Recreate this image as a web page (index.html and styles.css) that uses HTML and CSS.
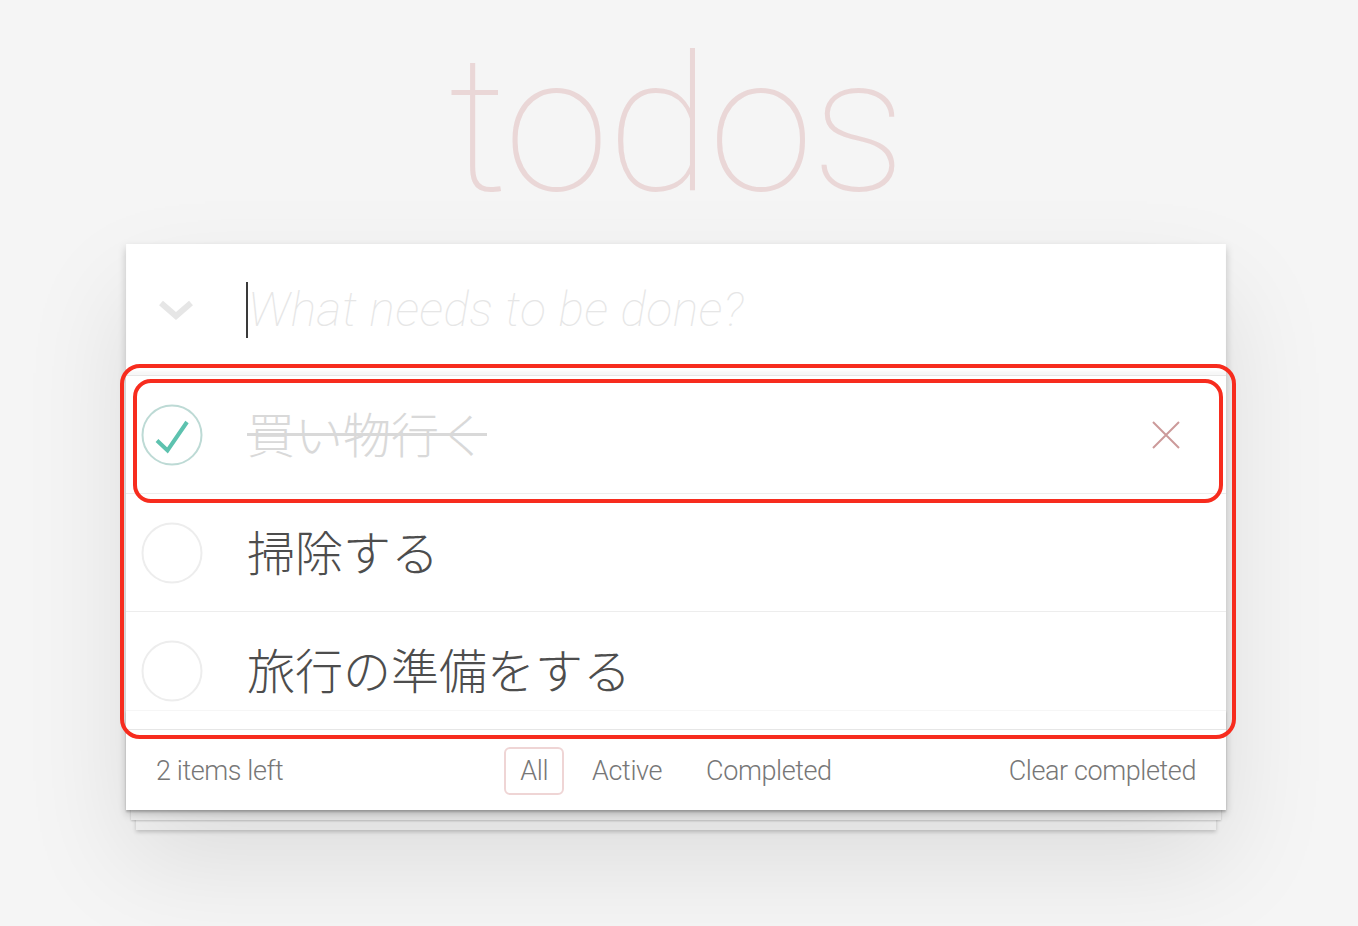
FILE: index.html
```html
<!DOCTYPE html>
<html lang="ja">
<head>
<meta charset="utf-8">
<title>todos</title>
<link rel="stylesheet" href="styles.css">
</head>
<body>
<div class="page">
  <h1 class="title">todos</h1>
  <section class="todoapp">
    <header class="header">
      <div class="toggle-all">
        <svg width="36" height="24" viewBox="0 0 36 24"><polyline points="3,3 18,16 33,3" fill="none" stroke="#e6e6e6" stroke-width="6" stroke-linejoin="miter"/></svg>
      </div>
      <div class="new-todo"><span class="caret"></span><span class="placeholder">What needs to be done?</span></div>
    </header>
    <main class="main">
      <ul class="todo-list">
        <li class="todo completed">
          <span class="toggle">
            <svg width="62" height="62" viewBox="0 0 62 62"><circle cx="31" cy="31" r="29.5" fill="none" stroke="#bddad5" stroke-width="2"/><polyline points="16,36.5 26.5,46.5 46,18" fill="none" stroke="#5dc2af" stroke-width="4"/></svg>
          </span>
          <span class="label">買い物行く</span>
          <span class="destroy">
            <svg width="30" height="30" viewBox="0 0 30 30"><path d="M2 2 L28 28 M28 2 L2 28" stroke="#cc9a9a" stroke-width="2" fill="none"/></svg>
          </span>
        </li>
        <li class="todo">
          <span class="toggle">
            <svg width="62" height="62" viewBox="0 0 62 62"><circle cx="31" cy="31" r="29.5" fill="none" stroke="#ededed" stroke-width="2"/></svg>
          </span>
          <span class="label">掃除する</span>
        </li>
        <li class="todo last">
          <span class="toggle">
            <svg width="62" height="62" viewBox="0 0 62 62"><circle cx="31" cy="31" r="29.5" fill="none" stroke="#ededed" stroke-width="2"/></svg>
          </span>
          <span class="label">旅行の準備をする</span>
        </li>
      </ul>
    </main>
    <footer class="footer">
      <span class="todo-count">2 items left</span>
      <ul class="filters">
        <li><a class="selected">All</a></li>
        <li><a>Active</a></li>
        <li><a>Completed</a></li>
      </ul>
      <span class="clear-completed">Clear completed</span>
    </footer>
  </section>
</div>
<div class="annot annot-outer"></div>
<div class="annot annot-inner"></div>
</body>
</html>
```

FILE: styles.css
```css
html, body {
  margin: 0;
  padding: 0;
}
body {
  background: #f5f5f5;
  font-family: "Roboto", "Noto Sans CJK JP", sans-serif;
  color: #4d4d4d;
  min-height: 926px;
  position: relative;
}
.page {
  padding-top: 25px;
}
.title {
  margin: 0 0 19px 126px;
  width: 1100px;
  text-align: center;
  font-size: 190px;
  line-height: 200px;
  height: 200px;
  font-weight: 100;
  color: rgba(175, 47, 47, 0.15);
  letter-spacing: -2px;
}
.todoapp {
  width: 1100px;
  margin-left: 126px;
  background: #fff;
  position: relative;
  box-shadow: 0 4px 8px 0 rgba(0, 0, 0, 0.2), 0 50px 100px 0 rgba(0, 0, 0, 0.1);
}
.header {
  display: flex;
  align-items: center;
  height: 131px;
  box-shadow: inset 0 -4px 2px rgba(0, 0, 0, 0.03);
}
.toggle-all {
  width: 120px;
  box-sizing: border-box;
  padding-left: 32px;
  padding-top: 4px;
  display: flex;
}
.new-todo {
  display: flex;
  align-items: center;
  height: 67px;
  font-size: 48px;
  font-style: italic;
  font-weight: 300;
}
.caret {
  width: 2px;
  height: 56px;
  background: #3a3a3a;
}
.placeholder {
  color: #e6e6e6;
  font-weight: 100;
  letter-spacing: 0.6px;
}
.main {
  border-top: 1px solid #e6e6e6;
}
.todo-list {
  list-style: none;
  margin: 0;
  padding: 0;
}
.todo {
  display: flex;
  align-items: center;
  height: 117px;
  border-bottom: 1px solid #ededed;
}
.todo.last {
  border-bottom: none;
  background: linear-gradient(to bottom, transparent 98px, #f6f6f6 98px, #f6f6f6 99px, transparent 99px);
}
.toggle {
  width: 62px;
  height: 62px;
  margin-left: 15px;
  display: flex;
}
.label {
  flex: 1;
  padding-left: 44px;
  padding-bottom: 6px;
  font-family: "Noto Sans CJK JP", sans-serif;
  font-size: 48px;
  font-weight: 300;
  line-height: 58px;
  color: #4d4d4d;
}
.completed .label {
  color: #d9d9d9;
  text-decoration: line-through;
  text-decoration-thickness: 3px;
}
.destroy {
  width: 30px;
  height: 30px;
  margin-right: 45px;
  display: flex;
}
.footer {
  border-top: 1px solid #e6e6e6;
  height: 40px;
  padding: 17px 30px 23px;
  display: grid;
  grid-template-columns: 1fr auto 1fr;
  align-items: center;
  font-size: 27px;
  letter-spacing: -0.4px;
  font-weight: 300;
  color: #777;
  position: relative;
}
.footer::before {
  content: "";
  position: absolute;
  left: 0;
  right: 0;
  bottom: 0;
  height: 100px;
  z-index: -1;
  box-shadow: 0 2px 2px rgba(0, 0, 0, 0.2),
    0 15px 0 -5px #f6f6f6,
    0 16px 2px -5px rgba(0, 0, 0, 0.2),
    0 30px 0 -10px #f6f6f6,
    0 32px 4px -10px rgba(0, 0, 0, 0.2);
}
.todo-count {
  justify-self: start;
}
.filters {
  list-style: none;
  margin: 0;
  padding: 0;
  display: flex;
}
.filters li {
  margin: 0 6px;
}
.filters a {
  display: block;
  padding: 6px 14px;
  line-height: 32px;
  border: 2px solid transparent;
  border-radius: 6px;
  color: #777;
}
.filters a.selected {
  border-color: rgba(175, 47, 47, 0.2);
}
.clear-completed {
  justify-self: end;
}
.annot {
  position: absolute;
  box-sizing: border-box;
  border: 4.5px solid #f72c1e;
  pointer-events: none;
}
.annot-outer {
  left: 120px;
  top: 364px;
  width: 1116px;
  height: 375px;
  border-radius: 20px;
}
.annot-inner {
  left: 133px;
  top: 379px;
  width: 1090px;
  height: 124px;
  border-radius: 18px;
}
```
